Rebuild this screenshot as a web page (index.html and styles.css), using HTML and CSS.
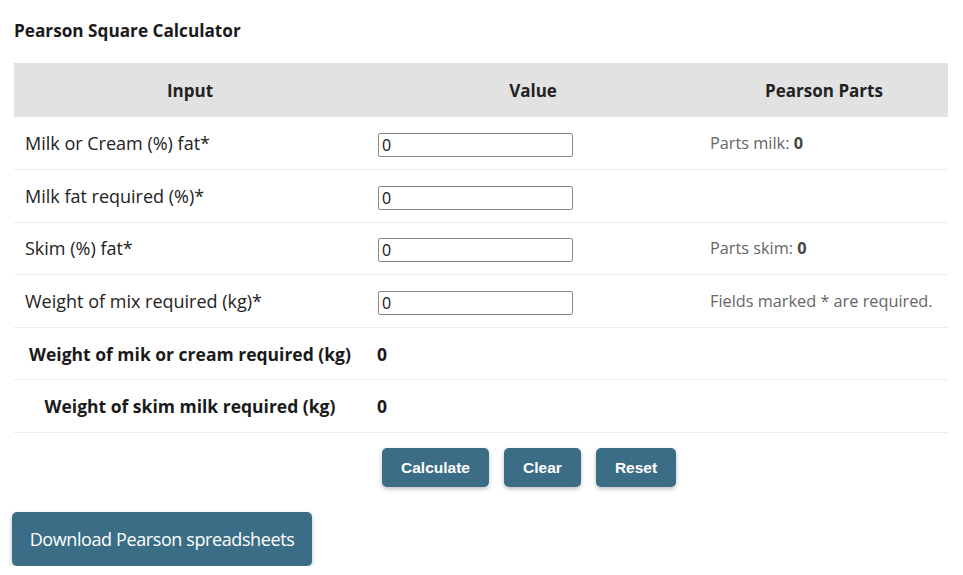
FILE: index.html
```html
<!DOCTYPE html>
<html lang="en">
<head>
<meta charset="utf-8">
<title>Pearson Square Calculator</title>
<link rel="stylesheet" href="styles.css">
</head>
<body>
<main class="page">
  <h1 class="title">Pearson Square Calculator</h1>
  <table class="calc">
    <colgroup>
      <col class="c1"><col class="c2"><col class="c3">
    </colgroup>
    <thead>
      <tr><th>Input</th><th>Value</th><th>Pearson Parts</th></tr>
    </thead>
    <tbody>
      <tr>
        <td class="label">Milk or Cream (%) fat*</td>
        <td><input class="field" type="text" value="0"></td>
        <td class="parts">Parts milk: <b>0</b></td>
      </tr>
      <tr>
        <td class="label">Milk fat required (%)*</td>
        <td><input class="field" type="text" value="0"></td>
        <td class="parts"></td>
      </tr>
      <tr>
        <td class="label">Skim (%) fat*</td>
        <td><input class="field" type="text" value="0"></td>
        <td class="parts">Parts skim: <b>0</b></td>
      </tr>
      <tr>
        <td class="label">Weight of mix required (kg)*</td>
        <td><input class="field" type="text" value="0"></td>
        <td class="parts">Fields marked * are required.</td>
      </tr>
      <tr>
        <th class="result">Weight of mik or cream required (kg)</th>
        <td class="result-val">0</td>
        <td></td>
      </tr>
      <tr>
        <th class="result">Weight of skim milk required (kg)</th>
        <td class="result-val">0</td>
        <td></td>
      </tr>
    </tbody>
  </table>
  <div class="actions">
    <div class="spacer"></div>
    <div class="btns">
      <button class="btn">Calculate</button>
      <button class="btn">Clear</button>
      <button class="btn">Reset</button>
    </div>
    <div class="spacer"></div>
  </div>
  <button class="download">Download Pearson spreadsheets</button>
</main>
</body>
</html>
```
FILE: styles.css
```css
* { box-sizing: border-box; }
html, body { margin: 0; padding: 0; background: #fff; }
body {
  font-family: "Open Sans", "Noto Sans", sans-serif;
  color: #222;
}
.page {
  padding: 19px 15px 0 14px;
}
.title {
  margin: 0 0 20px 0;
  font-size: 17.2px;
  font-weight: 700;
  line-height: 24px;
  color: #1a1a1a;
}
.calc {
  width: 934px;
  border-collapse: collapse;
  table-layout: fixed;
}
.c1 { width: 352px; }
.c2 { width: 334px; }
.c3 { width: 248px; }
.calc thead th {
  background: #e2e2e2;
  height: 54px;
  font-size: 17px;
  font-weight: 700;
  text-align: center;
  color: #222;
  padding: 0;
}
.calc tbody tr { height: 52.6px; border-bottom: 1px solid #ececec; }
.calc td { padding: 0 11px; vertical-align: middle; }
.label {
  font-size: 18px;
  color: #222;
}
.field {
  width: 195px;
  height: 24px;
  margin: 4px 0 0 1px;
  border: 1px solid #8a8a8a;
  border-radius: 2px;
  padding: 0 3px;
  font-family: "Open Sans", sans-serif;
  font-size: 16px;
  color: #111;
  background: #fff;
  display: block;
}
.parts {
  font-size: 16.3px;
  color: #666;
  padding-left: 10px !important;
  white-space: nowrap;
}
.parts b { color: #444; }
.result {
  font-size: 17.5px;
  font-weight: 700;
  text-align: center;
  color: #1a1a1a;
  padding: 0;
}
.result-val {
  font-size: 17.5px;
  font-weight: 700;
  color: #1a1a1a;
}
.actions {
  display: grid;
  grid-template-columns: 368px 334px 1fr;
  margin-top: 15px;
}
.btns {
  display: flex;
  gap: 15px;
}
.btn {
  background: #3b6e86;
  color: #fff;
  border: none;
  border-radius: 5px;
  height: 39px;
  padding: 0 10px;
  font-family: "Liberation Sans", Arial, sans-serif;
  font-size: 15.5px;
  font-weight: 700;
  box-shadow: 0 2px 4px rgba(0,0,0,0.25);
}
.btn:nth-child(1) { width: 107px; }
.btn:nth-child(2) { width: 77px; }
.btn:nth-child(3) { width: 80px; }
.download {
  margin: 25px 0 0 -2px;
  background: #3b6e86;
  color: #fff;
  border: none;
  border-radius: 5px;
  height: 54px;
  width: 300px;
  font-family: "Open Sans", sans-serif;
  font-size: 18px;
  letter-spacing: -0.4px;
  box-shadow: 0 2px 4px rgba(0,0,0,0.25);
}
```
